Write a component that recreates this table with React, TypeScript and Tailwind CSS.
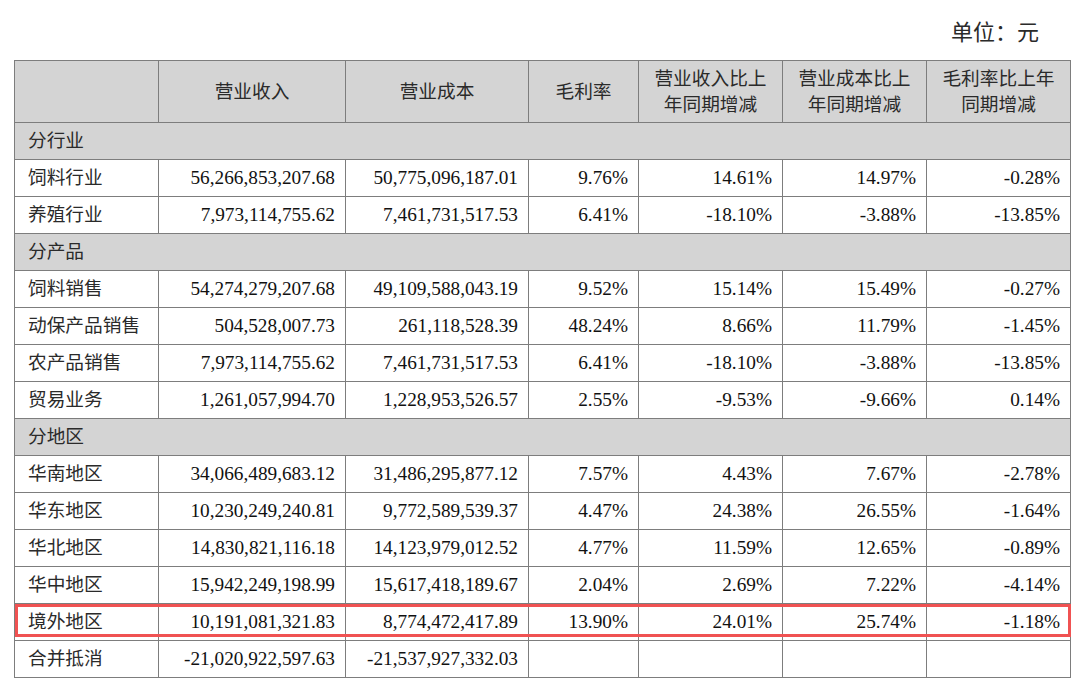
import React from "react";

type Row =
  | { kind: "section"; label: string }
  | { kind: "data"; label: string; v: string[]; hl?: boolean };

const rows: Row[] = [
  { kind: "section", label: "分行业" },
  { kind: "data", label: "饲料行业", v: ["56,266,853,207.68", "50,775,096,187.01", "9.76%", "14.61%", "14.97%", "-0.28%"] },
  { kind: "data", label: "养殖行业", v: ["7,973,114,755.62", "7,461,731,517.53", "6.41%", "-18.10%", "-3.88%", "-13.85%"] },
  { kind: "section", label: "分产品" },
  { kind: "data", label: "饲料销售", v: ["54,274,279,207.68", "49,109,588,043.19", "9.52%", "15.14%", "15.49%", "-0.27%"] },
  { kind: "data", label: "动保产品销售", v: ["504,528,007.73", "261,118,528.39", "48.24%", "8.66%", "11.79%", "-1.45%"] },
  { kind: "data", label: "农产品销售", v: ["7,973,114,755.62", "7,461,731,517.53", "6.41%", "-18.10%", "-3.88%", "-13.85%"] },
  { kind: "data", label: "贸易业务", v: ["1,261,057,994.70", "1,228,953,526.57", "2.55%", "-9.53%", "-9.66%", "0.14%"] },
  { kind: "section", label: "分地区" },
  { kind: "data", label: "华南地区", v: ["34,066,489,683.12", "31,486,295,877.12", "7.57%", "4.43%", "7.67%", "-2.78%"] },
  { kind: "data", label: "华东地区", v: ["10,230,249,240.81", "9,772,589,539.37", "4.47%", "24.38%", "26.55%", "-1.64%"] },
  { kind: "data", label: "华北地区", v: ["14,830,821,116.18", "14,123,979,012.52", "4.77%", "11.59%", "12.65%", "-0.89%"] },
  { kind: "data", label: "华中地区", v: ["15,942,249,198.99", "15,617,418,189.67", "2.04%", "2.69%", "7.22%", "-4.14%"] },
  { kind: "data", label: "境外地区", v: ["10,191,081,321.83", "8,774,472,417.89", "13.90%", "24.01%", "25.74%", "-1.18%"], hl: true },
  { kind: "data", label: "合并抵消", v: ["-21,020,922,597.63", "-21,537,927,332.03", "", "", "", ""] },
];

const cell = "border border-[#7d7d7d] p-0";

export default function App() {
  return (
    <div
      className="w-[1080px] h-[684px] bg-white text-[#111] overflow-hidden"
      style={{ fontFamily: '"Liberation Serif", "Noto Sans CJK SC", serif' }}
    >
      <div className="h-[60px] flex items-start justify-end pr-[41px] pt-[20px] text-[22px] leading-[26px] text-[#2a2a2a]">
        单位：元
      </div>
      <div className="relative ml-[14px] w-[1056px]">
        <table className="table-fixed border-collapse w-[1056px] text-[18.7px]">
          <colgroup>
            <col className="w-[144px]" />
            <col className="w-[187px]" />
            <col className="w-[183px]" />
            <col className="w-[110px]" />
            <col className="w-[144px]" />
            <col className="w-[144px]" />
            <col className="w-[144px]" />
          </colgroup>
          <tbody>
            <tr className="h-[62px] bg-[#d4d4d4] text-[#2a2a2a] leading-[26px]">
              <td className={cell}></td>
              <td className={cell + " text-center"}>营业收入</td>
              <td className={cell + " text-center"}>营业成本</td>
              <td className={cell + " text-center"}>毛利率</td>
              <td className={cell + " text-center"}>营业收入比上<br />年同期增减</td>
              <td className={cell + " text-center"}>营业成本比上<br />年同期增减</td>
              <td className={cell + " text-center"}>毛利率比上年<br />同期增减</td>
            </tr>
            {rows.map((r, i) =>
              r.kind === "section" ? (
                <tr key={i} className="h-[37px] bg-[#d4d4d4] text-[#2a2a2a]">
                  <td colSpan={7} className={cell + " pl-[13px] text-left"}>{r.label}</td>
                </tr>
              ) : (
                <tr key={i} className="h-[37px]">
                  <td className={cell + " pl-[13px] text-left text-[#2a2a2a]"}>{r.label}</td>
                  {r.v.map((x, j) => (
                    <td key={j} className={cell + " pr-[10px] text-right text-[19.3px] text-[#111]"}>{x}</td>
                  ))}
                </tr>
              )
            )}
          </tbody>
        </table>
        <div className="absolute left-[1px] w-[1056px] top-[544px] h-[33px] border-[3px] border-[#f05252] pointer-events-none" />
      </div>
    </div>
  );
}
